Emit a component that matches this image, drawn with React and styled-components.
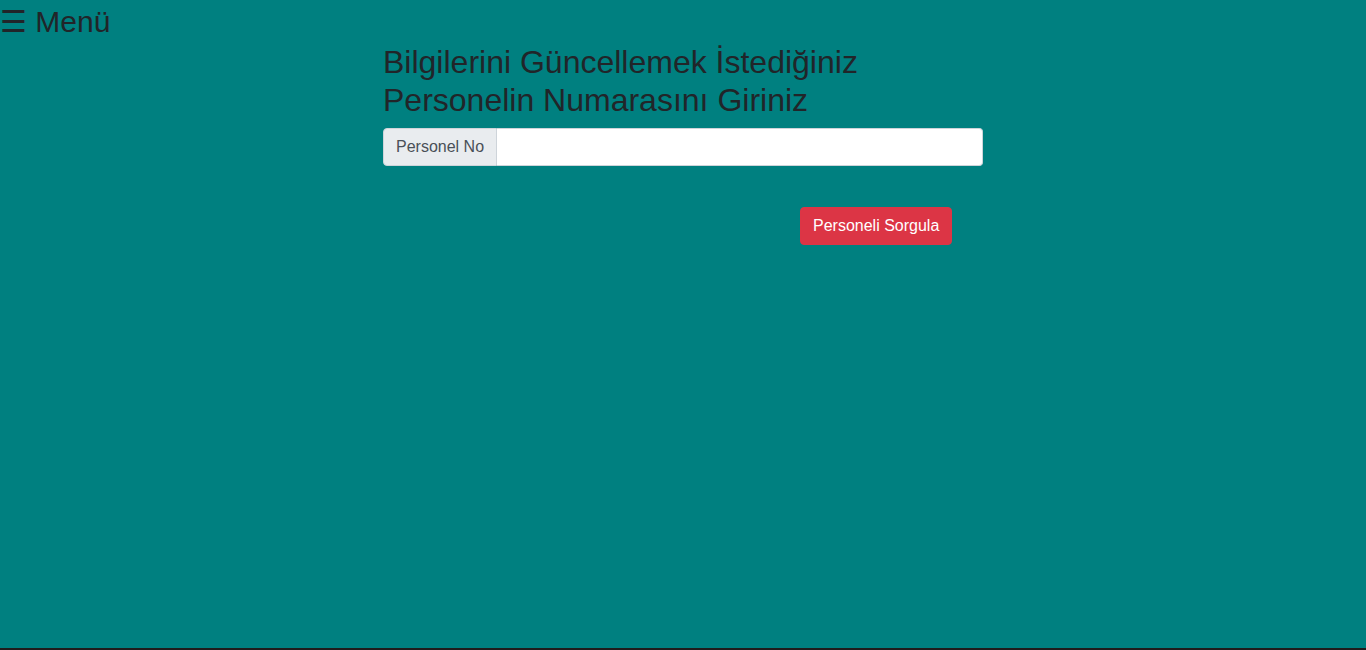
import styled, { createGlobalStyle } from 'styled-components'

const GlobalStyle = createGlobalStyle`
  html {
    background: #201c1c;
  }
  body {
    margin: 0;
    font-family: "Liberation Sans", Arial, sans-serif;
    color: #212529;
  }
`

const Page = styled.div`
  min-height: 648px;
  background: #008080;
`

const MenuToggle = styled.div`
  height: 43px;
  font-size: 30px;
  line-height: 44px;
  color: #212529;
  cursor: pointer;
  white-space: nowrap;
`

const Container = styled.main`
  width: 600px;
  margin: 0 auto;
`

const Title = styled.h2`
  margin: 0 0 8px;
  font-size: 32px;
  font-weight: 400;
  line-height: 1.2;
`

const InputGroup = styled.div`
  display: flex;
  height: 38px;
`

const Addon = styled.span`
  display: flex;
  align-items: center;
  padding: 6px 12px;
  font-size: 16px;
  line-height: 24px;
  color: #495057;
  background: #e9ecef;
  border: 1px solid #ced4da;
  border-radius: 4px 0 0 4px;
  white-space: nowrap;
`

const Input = styled.input`
  flex: 1;
  min-width: 0;
  padding: 6px 12px;
  font-size: 16px;
  font-family: inherit;
  border: 1px solid #ced4da;
  border-left: none;
  border-radius: 0 4px 4px 0;
  background: #fff;
  outline: none;
`

const Actions = styled.div`
  display: flex;
  padding: 41px 0 0 417px;
`

const Button = styled.button`
  padding: 6px 12px;
  font-size: 16px;
  line-height: 24px;
  font-family: inherit;
  color: #fff;
  background: #dc3545;
  border: 1px solid #dc3545;
  border-radius: 4px;
  cursor: pointer;
`

export default function App() {
  return (
    <>
      <GlobalStyle />
      <Page>
        <MenuToggle>☰ Menü</MenuToggle>
        <Container>
          <Title>
            Bilgilerini Güncellemek İstediğiniz Personelin Numarasını Giriniz
          </Title>
          <InputGroup>
            <Addon>Personel No</Addon>
            <Input type="text" />
          </InputGroup>
          <Actions>
            <Button>Personeli Sorgula</Button>
          </Actions>
        </Container>
      </Page>
    </>
  )
}
